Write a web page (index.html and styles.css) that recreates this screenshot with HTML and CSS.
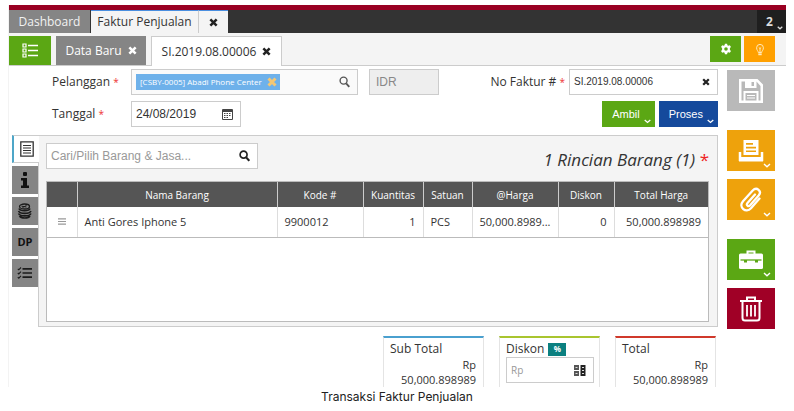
FILE: index.html
```html
<!DOCTYPE html>
<html lang="id">
<head>
  <meta charset="UTF-8" />
  <meta name="viewport" content="width=device-width, initial-scale=1.0" />
  <title>Faktur Penjualan</title>
  <link rel="stylesheet" href="styles.css">
</head>
<body>
  <div class="app">
    <!-- Top bar with the module tabs -->
    <div class="strip"></div>
    <nav class="topbar">
      <button class="tab tab-dashboard">Dashboard</button>
      <button class="tab tab-active">Faktur Penjualan</button>
      <button class="tab tab-close" aria-label="Tutup">
        <svg width="9" height="9" viewBox="0 0 10 10"><path d="M1.5 1.5l7 7M8.5 1.5l-7 7" stroke="#222" stroke-width="2.8"/></svg>
      </button>
      <button class="tab-count">2
        <svg width="6" height="4" viewBox="0 0 6 4"><path d="M.7.7L3 2.8 5.3.7" fill="none" stroke="#ddd" stroke-width="1.3"/></svg>
      </button>
    </nav>

    <!-- Document tabs -->
    <div class="docbar">
      <button class="doc-list" aria-label="Daftar">
        <svg width="16" height="15" viewBox="0 0 16 15" fill="none" stroke="#fff"><path d="M6 2.5h10M6 7.5h10M6 12.5h10" stroke-width="1.6"/><path d="M1 1h3v3H1zM1 6h3v3H1zM1 11h3v3H1z" stroke-width="1.2"/></svg>
      </button>
      <button class="doc doc-new">Data Baru
        <svg width="9" height="9" viewBox="0 0 10 10"><path d="M1.5 1.5l7 7M8.5 1.5l-7 7" stroke="#fff" stroke-width="2.8"/></svg>
      </button>
      <button class="doc doc-current">SI.2019.08.00006
        <svg width="9" height="9" viewBox="0 0 10 10"><path d="M1.5 1.5l7 7M8.5 1.5l-7 7" stroke="#222" stroke-width="2.8"/></svg>
      </button>
      <div class="doc-actions">
        <button class="square green" aria-label="Pengaturan">
          <svg width="12" height="12" viewBox="0 0 12 12"><path fill="#fff" fill-rule="evenodd" d="M4.9.8h2.2l.3 1.4 1 .5 1.4-.5L11 4.1l-1.1 1v1.8l1.1 1-1.2 1.9-1.4-.5-1 .5-.3 1.4H4.9l-.3-1.4-1-.5-1.4.5L1 7.9l1.1-1V5.1L1 4.1l1.2-1.9 1.4.5 1-.5zM6 4.2a1.8 1.8 0 1 0 0 3.6 1.8 1.8 0 0 0 0-3.6z"/></svg>
        </button>
        <button class="square amber" aria-label="Tips">
          <svg width="12" height="13" viewBox="0 0 12 13" fill="none" stroke="#ffe9bd"><path d="M4.3 9.5C4.3 8 2.6 7.3 2.6 4.8a3.4 3.4 0 0 1 6.8 0C9.4 7.3 7.7 8 7.7 9.5zM6 9V5.2M4.8 4.5L6 5.5l1.2-1" stroke-width="1"/><path d="M4.3 11.3h3.4" stroke-width="1.8"/></svg>
        </button>
      </div>
    </div>

    <div class="main">
      <div class="content">
        <!-- Invoice header form -->
        <form class="form">
          <div class="row">
            <label class="label" for="pelanggan">Pelanggan <i>*</i></label>
            <div class="field customer">
              <span class="chip">[CSBY-0005] Abadi Phone Center
                <svg width="10" height="10" viewBox="0 0 10 10"><path d="M1.5 1.5l7 7M8.5 1.5l-7 7" stroke="#f3c774" stroke-width="3"/></svg>
              </span>
              <input id="pelanggan" type="text">
              <svg width="11" height="12" viewBox="0 0 12 13" fill="none" stroke="#555"><circle cx="5" cy="5" r="3.8" stroke-width="1.5"/><path d="M7.8 8l3.4 3.8" stroke-width="2"/></svg>
            </div>
            <input class="currency" type="text" value="IDR" aria-label="Mata uang" disabled>
            <label class="label-no" for="nomor">No Faktur # <i>*</i></label>
            <div class="field number">
              <input id="nomor" type="text" value="SI.2019.08.00006">
              <svg width="8" height="8" viewBox="0 0 10 10"><path d="M1.5 1.5l7 7M8.5 1.5l-7 7" stroke="#222" stroke-width="2.8"/></svg>
            </div>
          </div>
          <div class="row">
            <label class="label" for="tanggal">Tanggal <i>*</i></label>
            <div class="field date">
              <input id="tanggal" type="text" value="24/08/2019">
              <svg width="11" height="12" viewBox="0 0 11 12" fill="none" stroke="#444"><path d="M.5 1.5h10v10H.5z"/><path d="M.5 3h10" stroke-width="2"/><path d="M2 5.5h7M2 7.5h7M2 9.5h5" stroke-dasharray="1.5 1"/></svg>
            </div>
            <div class="row-actions">
              <button type="button" class="action green">Ambil
                <svg width="7" height="5" viewBox="0 0 7 5"><path d="M.7 1l2.8 2.5L6.3 1" fill="none" stroke="#fff" stroke-width="1.3"/></svg>
              </button>
              <button type="button" class="action blue">Proses
                <svg width="7" height="5" viewBox="0 0 7 5"><path d="M.7 1l2.8 2.5L6.3 1" fill="none" stroke="#fff" stroke-width="1.3"/></svg>
              </button>
            </div>
          </div>
        </form>

        <!-- Item details -->
        <div class="details">
          <div class="side">
            <button class="side-tab side-current" aria-label="Rincian">
              <svg width="14" height="16" viewBox="0 0 14 16" fill="none" stroke="#333"><path d="M.8.8h12.4v14.4H.8z" stroke-width="1.3"/><path d="M3 4.5h8M3 7h8M3 9.5h8M3 12h8" stroke-width="1.2"/></svg>
            </button>
            <button class="side-tab" aria-label="Info">
              <svg width="10" height="16" viewBox="0 0 10 16" fill="#111"><rect x="3" y="0" width="4" height="4" rx="1"/><path d="M1 6h6v7.5h2V16H1v-2.500h2v-5H1z"/></svg>
            </button>
            <button class="side-tab" aria-label="Biaya">
              <svg width="16" height="16" viewBox="0 0 16 16" fill="none" stroke="#1b1b1b"><ellipse cx="7.5" cy="3.500" rx="5" ry="2.500" stroke-width="1.3"/><path d="M4.500 3.200l5 .8M5.500 4.500l4-2" stroke-width="1"/><path d="M2 5.500c1 3 10 3 11 0M1.500 8c1.500 3.200 11 3.200 12.500 0M1.500 10.500c1.500 3.200 11 3.200 12.500 0M2.500 13c1.500 2.600 9 2.600 10.500 0" stroke-width="1.6"/></svg>
            </button>
            <button class="side-tab side-dp">DP</button>
            <button class="side-tab" aria-label="Daftar cek">
              <svg width="16" height="12" viewBox="0 0 16 12" fill="none" stroke="#1b1b1b"><path d="M5.500 1.800H15M5.500 6H15M5.500 10.200H15" stroke-width="1.7"/><path d="M.8 1.800l1 1L4 .5M.8 6l1 1L4 4.700M.8 10.200l1 1L4 8.900" stroke-width="1.1"/></svg>
            </button>
          </div>

          <div class="panel">
            <div class="panel-head">
              <div class="field search">
                <input type="text" placeholder="Cari/Pilih Barang &amp; Jasa..." aria-label="Cari barang">
                <svg width="11" height="12" viewBox="0 0 12 13" fill="none" stroke="#222"><circle cx="5" cy="5" r="3.8" stroke-width="1.8"/><path d="M7.8 8l3.4 3.8" stroke-width="2.3"/></svg>
              </div>
              <h2>1 Rincian Barang (1) <b>*</b></h2>
            </div>
            <div class="table-box">
              <table>
                <colgroup>
                  <col class="c-grip"><col><col class="c-kode"><col class="c-qty"><col class="c-unit"><col class="c-price"><col class="c-disc"><col class="c-total">
                </colgroup>
                <thead>
                  <tr>
                    <th></th><th>Nama Barang</th><th>Kode #</th><th>Kuantitas</th><th>Satuan</th><th>@Harga</th><th>Diskon</th><th>Total Harga</th>
                  </tr>
                </thead>
                <tbody>
                  <tr>
                    <td class="grip"><svg width="8" height="7" viewBox="0 0 8 7"><path d="M0 .8h8M0 3.5h8M0 6.2h8" stroke="#999" stroke-width="1.2"/></svg></td>
                    <td>Anti Gores Iphone 5</td>
                    <td>9900012</td>
                    <td class="num">1</td>
                    <td>PCS</td>
                    <td>50,000.8989...</td>
                    <td class="num">0</td>
                    <td class="num">50,000.898989</td>
                  </tr>
                </tbody>
              </table>
            </div>
          </div>
        </div>

        <!-- Totals -->
        <div class="totals">
          <div class="card card-sub">
            <div class="card-title">Sub Total</div>
            <div class="amount">Rp<br>50,000.898989</div>
          </div>
          <div class="card card-disc">
            <div class="card-title"><label for="diskon">Diskon</label> <button class="percent">%</button></div>
            <div class="field disc">
              <input id="diskon" type="text" placeholder="Rp">
              <svg width="12" height="11" viewBox="0 0 12 11"><path fill="#555" d="M0 0h5v5H0zM0 6h5v5H0z"/><path fill="#222" d="M6.5 0h5v11h-5z"/><path d="M1.5 2.5h2M1.5 8.5h2M8 2.5h2M8 5.5h2M8 8.5h2" stroke="#ddd" stroke-width="1"/></svg>
            </div>
          </div>
          <div class="card card-total">
            <div class="card-title">Total</div>
            <div class="amount">Rp<br>50,000.898989</div>
          </div>
        </div>
      </div>

      <!-- Document tools -->
      <div class="tools">
        <button class="tool grey" aria-label="Simpan">
          <svg width="26" height="26" viewBox="0 0 26 26"><path fill="#fff" fill-rule="evenodd" d="M1 1h18.500L25 6.500V25H1zM3.500 3.500v19h2V13h15v9.500h2V8L18.500 3.500V10H7V3.500zM13.500 4h2.500v4h-2.500zM7.500 15v7.500h11V15z"/><path d="M9 17.500h8M9 20h8" stroke="#fff" stroke-width="1"/></svg>
        </button>
        <button class="tool orange" aria-label="Cetak">
          <svg width="26" height="22" viewBox="0 0 26 22"><path fill="#fff" fill-rule="evenodd" d="M5.500 0h15v15h-15zM8 3v1.700h7V3zM8 6.700v1.700h10V6.700zM8 10.400v1.700h10v-1.700z"/><path d="M2 12v9M24 12v9" stroke="#fff" stroke-width="2.500"/><path fill="#fff" d="M1 17h24v4.500H1z"/></svg>
          <svg class="caret" width="8" height="5" viewBox="0 0 8 5"><path d="M1 1l3 2.700L7 1" fill="none" stroke="#fff" stroke-width="1.4"/></svg>
        </button>
        <button class="tool orange" aria-label="Lampiran">
          <svg width="24" height="26" viewBox="0 0 24 26"><path d="M16 7.500L8.500 16c-1.700 2 .8 4.200 2.600 2.300l8.600-9.800c3.600-4.300-2-9.300-6-5L4 14.200c-5 6 3 12.500 8 7l8.500-9.700" fill="none" stroke="#fff" stroke-width="2.300" stroke-linecap="round"/></svg>
          <svg class="caret" width="8" height="5" viewBox="0 0 8 5"><path d="M1 1l3 2.700L7 1" fill="none" stroke="#fff" stroke-width="1.4"/></svg>
        </button>
        <button class="tool green" aria-label="Perkakas">
          <svg width="26" height="20" viewBox="0 0 26 20"><path d="M9.500 4V1.500h7V4" fill="none" stroke="#fff" stroke-width="2"/><rect x="1" y="3.500" width="24" height="15.500" rx="1.500" fill="#fff"/><path d="M2.500 10h21" stroke="#5ba714" stroke-width="1.300"/><path fill="#5ba714" d="M6 10h3v2.500H6zM17 10h3v2.500h-3z"/></svg>
          <svg class="caret" width="8" height="5" viewBox="0 0 8 5"><path d="M1 1l3 2.700L7 1" fill="none" stroke="#fff" stroke-width="1.4"/></svg>
        </button>
        <button class="tool red" aria-label="Hapus">
          <svg width="24" height="26" viewBox="0 0 24 26" fill="none" stroke="#fff"><path d="M1 5h22M8 4.500V1.500h8v3" stroke-width="2"/><path d="M3.500 5v17c0 1.800.8 2.500 2.500 2.500h12c1.700 0 2.500-.7 2.500-2.500V5" stroke-width="2"/><path d="M8 9v11.500M12 9v11.500M16 9v11.500" stroke-width="1.800"/></svg>
        </button>
      </div>
    </div>
  </div>
  <p class="caption">Transaksi Faktur Penjualan</p>
</body>
</html>
```

FILE: styles.css
```css
* {
  box-sizing: border-box;
}
body {
  margin: 5px 8px 0;
  background: #fff;
  color: #333;
  font-family: "Open Sans", "Noto Sans", sans-serif;
  font-size: 12px;
  line-height: 16px;
}
button, input {
  font: inherit;
  color: inherit;
  margin: 0;
  padding: 0;
  border: 0;
  background: none;
  border-radius: 0;
}
button {
  display: flex;
  align-items: center;
  justify-content: center;
  white-space: nowrap;
  cursor: pointer;
}
svg {
  display: block;
  flex: none;
}
.green { background: #5ba714; }
.amber { background: #ffa000; }
.orange { background: #eea20c; }
.blue { background: #154a9c; }
.grey { background: #b9b9b9; }
.red { background: #a00026; }

/* Top bar */
.app {
  border-left: 1px solid #f3f3f3;
}
.strip {
  height: 5px;
  background: #990022;
}
.topbar {
  display: flex;
  height: 23px;
  background: #333;
}
.tab {
  background: #f4f4f4;
  border-top: 1px solid #4a8fe0;
}
.tab-dashboard {
  width: 81px;
  margin-right: 1px;
  background: #858585;
  border-top: 0;
  color: #f2f2f2;
}
.tab-active {
  width: 107px;
}
.tab-close {
  width: 30px;
  border-left: 1px solid #ccc;
}
.tab-count {
  width: 29px;
  margin-left: auto;
  padding-left: 6px;
  gap: 4px;
  background: #1f1f1f;
  color: #ddd;
  font-weight: bold;
}
.tab-count svg {
  align-self: flex-end;
  margin-bottom: 3px;
}

/* Document tabs */
.docbar {
  display: flex;
  align-items: flex-end;
  height: 33px;
  padding: 2px 11px 0 0;
  background: #f4f4f4;
  border-bottom: 1px solid #ccc;
}
.doc-list {
  width: 42px;
  height: 29px;
  margin-right: 5px;
  background: #5ba714;
}
.doc {
  height: 29px;
  gap: 6px;
  margin-right: 5px;
}
.doc-new {
  width: 90px;
  background: #858585;
  color: #fff;
}
.doc-current {
  width: 131px;
  height: 30px;
  margin-bottom: -1px;
  background: #fff;
  border: 1px solid #ccc;
  border-bottom: 0;
}
.doc-actions {
  display: flex;
  gap: 3px;
  margin-left: auto;
  margin-bottom: 3px;
}
.square {
  width: 31px;
  height: 26px;
}

/* Form */
.main {
  display: flex;
  gap: 9px;
  padding: 3px 11px 0 3px;
}
.content {
  flex: 1;
  min-width: 0;
}
.form {
  display: flex;
  flex-direction: column;
  gap: 6px;
  padding-left: 40px;
}
.row {
  display: flex;
  align-items: center;
}
.label {
  width: 79px;
}
.label i, .label-no i {
  color: #e33;
  font-size: 10px;
  font-style: normal;
}
.label-no {
  margin-left: auto;
  margin-right: 4px;
}
.field {
  display: flex;
  align-items: center;
  height: 26px;
  padding: 0 7px 0 4px;
  border: 1px solid #ccc;
  background: #fff;
}
.field input {
  flex: 1;
  min-width: 0;
  font-family: "Liberation Sans", Arial, sans-serif;
}
.customer {
  width: 227px;
  background: #fafafa;
}
.chip {
  display: flex;
  align-items: center;
  gap: 5px;
  height: 16px;
  padding: 0 3px 0 4px;
  background: #6eb1ea;
  color: #fff;
  font-size: 8px;
  white-space: nowrap;
}
.currency {
  width: 70px;
  height: 26px;
  margin-left: 11px;
  padding-left: 6px;
  border: 1px solid #ccc;
  background: #eee;
  color: #888;
  font-family: "Liberation Sans", Arial, sans-serif;
}
.number {
  width: 149px;
}
.number input {
  font-size: 10px;
}
.date {
  width: 110px;
}
.row-actions {
  display: flex;
  gap: 4px;
  margin-left: auto;
}
.action {
  height: 26px;
  padding: 0 4px 0 10px;
  gap: 4px;
  color: #fff;
  font-family: "Liberation Sans", Arial, sans-serif;
  font-size: 11px;
}
.action svg {
  align-self: flex-end;
  margin-bottom: 3px;
}

/* Item details */
.details {
  display: flex;
  margin-top: 8px;
}
.side {
  display: flex;
  flex-direction: column;
  gap: 3px;
  width: 26px;
}
.side-tab {
  height: 28px;
  background: #858585;
}
.side-current {
  width: 27px;
  background: #fff;
  border: 1px solid #ccc;
  border-left: 2px solid #4ea6c8;
  border-right: 0;
  z-index: 1;
}
.side-dp {
  color: #111;
  font-size: 11px;
  font-weight: bold;
}
.panel {
  flex: 1;
  min-width: 0;
  padding: 7px 8px 4px 7px;
  border: 1px solid #ccc;
  background: #f4f4f4;
}
.panel-head {
  display: flex;
  justify-content: space-between;
  align-items: center;
  height: 26px;
  margin-bottom: 12px;
}
.search {
  width: 212px;
}
.search input::placeholder, .disc input::placeholder {
  color: #999;
  opacity: 1;
}
.panel-head h2 {
  margin: 8px 0 0;
  font-size: 17px;
  font-style: italic;
  font-weight: normal;
}
.panel-head b {
  color: #e22;
  font-style: normal;
  font-weight: normal;
}
.table-box {
  min-height: 141px;
  border: 1px solid #bbb;
  background: #fff;
}
table {
  width: 100%;
  table-layout: fixed;
  border-collapse: collapse;
}
.c-grip { width: 30px; }
.c-kode { width: 86px; }
.c-qty { width: 60px; }
.c-unit { width: 49px; }
.c-price { width: 86px; }
.c-disc { width: 56px; }
.c-total { width: 94px; }
th {
  height: 25px;
  padding: 0;
  background: #555;
  color: #fff;
  font-size: 10px;
  font-weight: normal;
}
th + th {
  border-left: 1px solid #ccc;
}
td {
  height: 30px;
  padding: 0 7px;
  border-bottom: 1px solid #bbb;
  font-size: 11px;
  white-space: nowrap;
}
td + td {
  border-left: 1px solid #ddd;
}
.grip svg {
  margin: 0 auto;
}
.num {
  text-align: right;
}

/* Totals */
.totals {
  display: flex;
  justify-content: flex-end;
  gap: 15px;
  margin-top: 9px;
  padding-right: 2px;
}
.card {
  width: 101px;
  padding: 3px 7px 0 6px;
  border: 1px solid #e4e4e4;
  border-bottom: 0;
}
.card-sub { border-top: 2px solid #4aa0cf; }
.card-disc { border-top: 2px solid #a9c52f; }
.card-total { border-top: 2px solid #d0392b; }
.card-title {
  display: flex;
  align-items: center;
  gap: 4px;
}
.amount {
  font-size: 11px;
  line-height: 15px;
  text-align: right;
}
.percent {
  width: 18px;
  height: 13px;
  background: #0b8080;
  color: #fff;
  font-size: 8px;
  font-weight: bold;
}
.disc {
  width: 88px;
}
.disc input {
  font-family: "Open Sans", sans-serif;
  font-size: 10px;
}

/* Document tools */
.tools {
  display: flex;
  flex-direction: column;
  width: 48px;
  padding-top: 1px;
  gap: 8px;
}
.tool {
  position: relative;
  height: 41px;
}
.tool:nth-child(2), .tool:nth-child(4) {
  margin-top: 11px;
}
.caret {
  position: absolute;
  right: 4px;
  bottom: 3px;
}
.caption {
  margin: 2px 0 0;
  color: #222;
  font-family: Inter, sans-serif;
  text-align: center;
}
```
